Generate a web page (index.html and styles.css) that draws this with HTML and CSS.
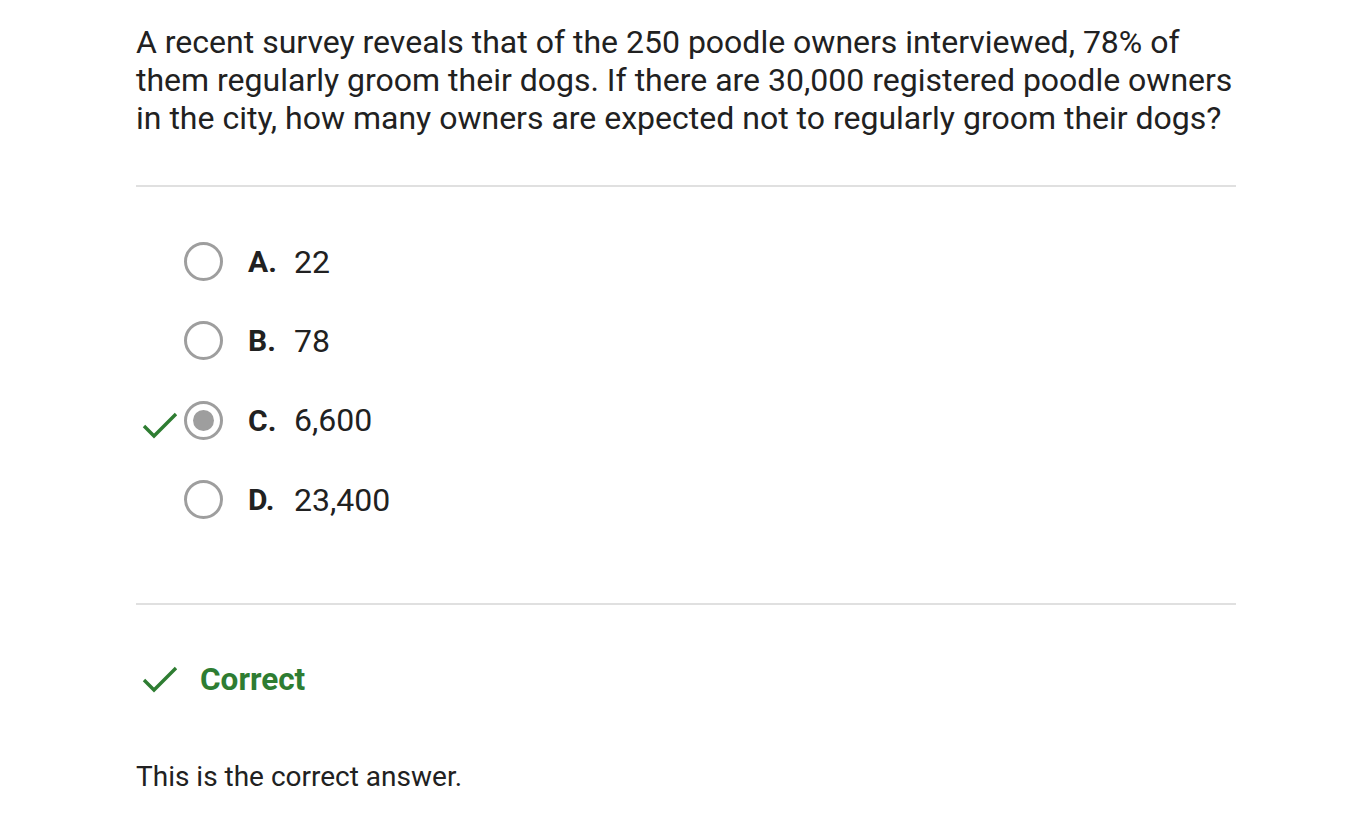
FILE: index.html
```html
<!DOCTYPE html>
<html>
<head>
<meta charset="utf-8">
<link rel="stylesheet" href="styles.css">
</head>
<body>
<div class="page">
  <p class="question">A recent survey reveals that of the 250 poodle owners interviewed, 78% of them regularly groom their dogs. If there are 30,000 registered poodle owners in the city, how many owners are expected not to regularly groom their dogs?</p>
  <hr class="rule">
  <ul class="options">
    <li class="option"><span class="mark"></span><span class="radio"></span><span class="letter">A.</span><span class="value">22</span></li>
    <li class="option"><span class="mark"></span><span class="radio"></span><span class="letter">B.</span><span class="value">78</span></li>
    <li class="option"><span class="mark"><svg viewBox="0 0 36 30" width="36" height="30"><path d="M2 15 L12 25 L34 3" fill="none" stroke="#2e7d32" stroke-width="3.4"/></svg></span><span class="radio selected"><span class="dot"></span></span><span class="letter">C.</span><span class="value">6,600</span></li>
    <li class="option"><span class="mark"></span><span class="radio"></span><span class="letter">D.</span><span class="value">23,400</span></li>
  </ul>
  <hr class="rule rule2">
  <div class="result">
    <svg class="result-check" viewBox="0 0 36 30" width="36" height="30"><path d="M2 15 L12 25 L34 3" fill="none" stroke="#2e7d32" stroke-width="3.4"/></svg>
    <span class="result-text">Correct</span>
  </div>
  <p class="explain">This is the correct answer.</p>
</div>
</body>
</html>
```
FILE: styles.css
```css
html, body {
  margin: 0;
  padding: 0;
  background: #fff;
}
body {
  font-family: Roboto, "Liberation Sans", sans-serif;
  color: #212121;
}
.page {
  width: 1100px;
  padding: 23px 0 0 136px;
}
.question {
  margin: 0;
  font-size: 32px;
  line-height: 38px;
  letter-spacing: 0;
}
.rule {
  border: 0;
  height: 2px;
  background: #e0e0e0;
  margin: 48px 0 0 0;
}
.options {
  list-style: none;
  margin: 0;
  padding: 0;
  margin-top: 35px;
}
.option {
  display: flex;
  align-items: center;
  height: 79.3px;
}
.mark {
  width: 42px;
  padding-left: 6px;
  display: flex;
  align-items: center;
  padding-top: 12px;
}
.radio {
  box-sizing: border-box;
  width: 39px;
  height: 39px;
  border: 3px solid #9e9e9e;
  border-radius: 50%;
  display: flex;
  align-items: center;
  justify-content: center;
  margin-right: 25px;
}
.dot {
  width: 21px;
  height: 21px;
  border-radius: 50%;
  background: #9e9e9e;
}
.letter {
  font-weight: 700;
  font-size: 30px;
  width: 46px;
}
.value {
  font-size: 32px;
}
.rule2 {
  margin-top: 64px;
}
.result {
  display: flex;
  align-items: center;
  margin-top: 56px;
  padding-left: 6px;
}
.result-check {
  margin-right: 22px;
}
.result-text {
  color: #2e7d32;
  font-weight: 700;
  font-size: 31.5px;
}
.explain {
  margin: 62px 0 0 0;
  font-size: 28px;
}
```
